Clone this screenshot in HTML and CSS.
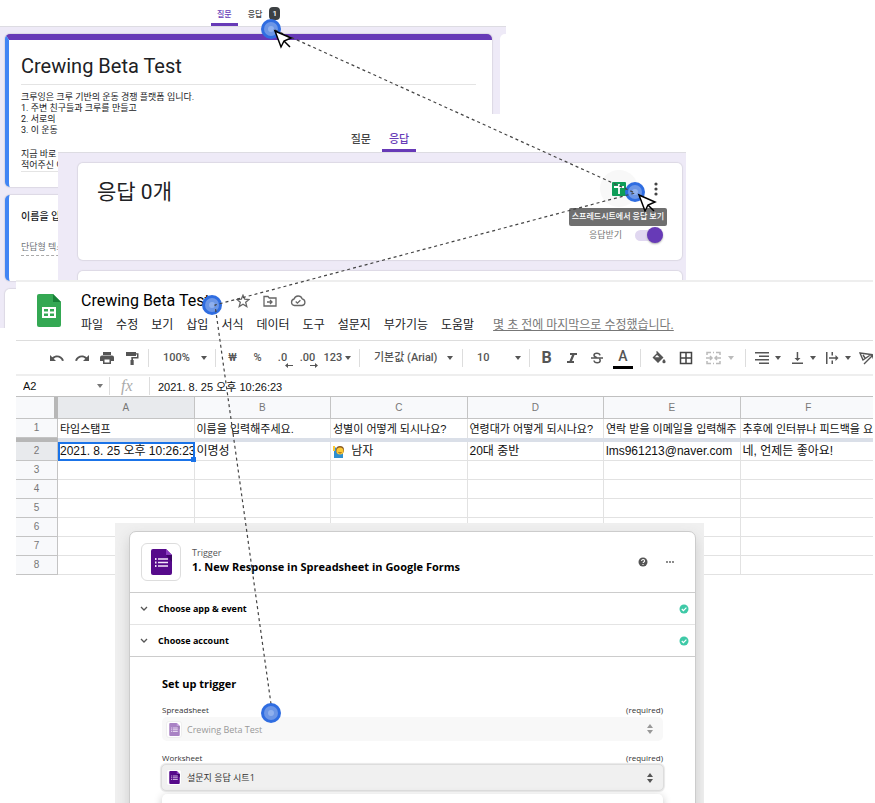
FILE: index.html
```
<!DOCTYPE html>
<html lang="ko">
<head>
  <meta charset="UTF-8">
  <title>Crewing Beta Test</title>
  <link rel="stylesheet" href="styles.css">
</head>
<body>
  <!-- shared icons -->
  <svg class="defs" aria-hidden="true">
    <symbol id="forms" viewBox="0 0 21 26">
      <path d="M2 0h13l6 6v18a2 2 0 0 1-2 2H2a2 2 0 0 1-2-2V2a2 2 0 0 1 2-2z" fill="#560a8b"/>
      <path d="M15 6h6v7z" fill="#3d0566"/>
      <path d="M15 0l6 6h-6z" fill="#8b3cc0"/>
      <path d="M7 10h10M7 13.500h10M7 17h10" stroke="#f3e8fa" stroke-width="1.500"/>
      <path d="M4 10h1.500M4 13.500h1.500M4 17h1.500" stroke="#f3e8fa" stroke-width="1.800"/>
    </symbol>
    <symbol id="check" viewBox="0 0 10 10">
      <circle cx="5" cy="5" r="4.500" fill="#3ec9a7"/>
      <path d="M2.800 5l1.600 1.600L7.400 3.600" fill="none" stroke="#fff" stroke-width="1.200"/>
    </symbol>
    <symbol id="chevron" viewBox="0 0 8 6">
      <path d="M1 1l3 3 3-3" fill="none" stroke="#555" stroke-width="1.300"/>
    </symbol>
    <symbol id="updown" viewBox="0 0 6 10">
      <path d="M0 4l3-4 3 4zM0 6h6l-3 4z" fill="currentColor"/>
    </symbol>
  </svg>

  <main class="canvas">
    <section class="window editor">
      <nav class="tabs">
        <button class="tab active">질문</button>
        <button class="tab">응답 <span class="badge">1</span></button>
      </nav>
      <div class="editor-body">
        <div class="questions">
          <div class="card intro">
            <h1>Crewing Beta Test</h1>
            <div class="text">
              <p>크루잉은 크루 기반의 운동 경쟁 플랫폼 입니다.<br>1. 주변 친구들과 크루를 만들고<br>2. 서로의 운<br>3. 이 운동</p>
              <p>지금 바로 크<br>적어주신 이</p>
            </div>
          </div>
          <div class="card question">
            <h2>이름을 입</h2>
            <p>단답형 텍스</p>
          </div>
          <div class="card next"></div>
        </div>
        <div class="side"></div>
      </div>
    </section>

    <section class="window answers">
      <nav class="tabs">
        <button class="tab">질문</button>
        <button class="tab active">응답</button>
      </nav>
      <div class="answers-body">
        <div class="card summary">
          <h2>응답 0개</h2>
          <div class="summary-side">
            <div class="actions">
              <button class="round" aria-label="스프레드시트에서 응답 보기">
                <svg width="14" height="14" viewBox="0 0 14 14"><rect width="14" height="14" rx="1" fill="#0f9d58"/><path d="M2 5h10M7 2v10" stroke="#fff" stroke-width="1.800"/></svg>
              </button>
              <button class="more" aria-label="더보기">
                <svg width="4" height="14" viewBox="0 0 4 14" fill="#444"><circle cx="2" cy="2" r="1.600"/><circle cx="2" cy="7" r="1.600"/><circle cx="2" cy="12" r="1.600"/></svg>
              </button>
              <span class="tooltip">스프레드시트에서 응답 보기</span>
            </div>
            <label class="accept">응답받기 <input type="checkbox" checked></label>
          </div>
        </div>
        <div class="card"></div>
      </div>
    </section>

    <section class="window sheet">
      <header class="sheet-head">
        <svg class="logo" width="24" height="33" viewBox="0 0 24 33">
          <path d="M2 0h14l8 8v23a2 2 0 0 1-2 2H2a2 2 0 0 1-2-2V2a2 2 0 0 1 2-2z" fill="#34a853"/>
          <path d="M16 0l8 8h-8z" fill="#188038"/>
          <path d="M5 13h14v11H5zM7 15v2.500h4V15zM13 15v2.500h4V15zM7 19.500V22h4v-2.500zM13 19.500V22h4v-2.500z" fill="#fff" fill-rule="evenodd"/>
        </svg>
        <div>
          <div class="title">
            <h2>Crewing Beta Test</h2>
            <button aria-label="별표"><svg width="14" height="14" viewBox="0 0 14 14"><path d="M7 1.200l1.700 4 4.300.3-3.300 2.800 1.100 4.300L7 10.300l-3.800 2.300 1.100-4.300L1 5.500l4.300-.3z"/></svg></button>
            <button aria-label="이동"><svg width="14" height="14" viewBox="0 0 14 14"><path d="M1 2.500h4l1.300 1.500H13v8H1zM4 8h5M7 6l2 2-2 2"/></svg></button>
            <button aria-label="저장됨"><svg width="16" height="14" viewBox="0 0 16 14"><path d="M4.500 11.500a3.300 3.300 0 0 1-.4-6.500 4.200 4.200 0 0 1 8-.2 3.400 3.400 0 0 1 0 6.700zM5.700 7.500l1.700 1.700 3-3"/></svg></button>
          </div>
          <nav class="menu">
            <button>파일</button><button>수정</button><button>보기</button><button>삽입</button><button>서식</button><button>데이터</button><button>도구</button><button>설문지</button><button>부가기능</button><button>도움말</button>
            <a href="#">몇 초 전에 마지막으로 수정했습니다.</a>
          </nav>
        </div>
      </header>

      <div class="toolbar">
        <button aria-label="실행취소"><svg width="16" height="14" viewBox="0 0 16 14"><path d="M1 4v6h6L4.700 7.700C7.500 5.300 11.500 6 13 10l2-.6C13 4.300 7.300 3 3.300 6.300z"/></svg></button>
        <button aria-label="재실행"><svg width="16" height="14" viewBox="0 0 16 14"><path d="M15 4v6H9l2.300-2.300C8.500 5.300 4.500 6 3 10l-2-.6C3 4.300 8.700 3 12.700 6.300z"/></svg></button>
        <button aria-label="인쇄"><svg width="14" height="14" viewBox="0 0 14 14"><path d="M3 1h8v3H3zM2 4.500h10a2 2 0 0 1 2 2V10h-3v3H3v-3H0V6.500a2 2 0 0 1 2-2zM4.500 8.500v3h5v-3z" fill-rule="evenodd"/></svg></button>
        <button aria-label="서식 복사"><svg width="14" height="14" viewBox="0 0 14 14"><path d="M1 1h10v1.200h2.500V7.500H8V9h.7v5H5.500V9h.8V6H12V3.600h-1V5H1z"/></svg></button>
        <span class="sep"></span>
        <label class="drop zoom"><select aria-label="확대"><option>100%</option></select></label>
        <span class="sep"></span>
        <button>₩</button>
        <button>%</button>
        <button class="dec">.0<svg width="8" height="5" viewBox="0 0 8 5"><path d="M0 2.500L3 0v2h5v1H3v2z"/></svg></button>
        <button class="dec">.00<svg width="8" height="5" viewBox="0 0 8 5"><path d="M8 2.500L5 0v2H0v1h5v2z"/></svg></button>
        <button class="with-caret format">123</button>
        <span class="sep"></span>
        <label class="drop family"><select aria-label="글꼴"><option>기본값 (Arial)</option></select></label>
        <span class="sep"></span>
        <label class="drop zoom"><select aria-label="글꼴 크기"><option>10</option></select></label>
        <span class="sep"></span>
        <button class="bold">B</button>
        <button aria-label="기울임꼴"><svg width="12" height="12" viewBox="0 0 12 12"><path d="M4 1h7v2H8.500L6 9h2v2H1V9h2.500L6 3H4z"/></svg></button>
        <button aria-label="취소선"><svg width="14" height="14" viewBox="0 0 14 14"><path d="M1 7h12M10 4.300C9.500 1.500 4 1.500 4 4.300c0 1.400 1.500 1.900 3 2.400M4 9.500c.4 3 6.200 3 6.200 0 0-.8-.3-1.300-.8-1.700" fill="none" stroke="#555" stroke-width="1.500"/></svg></button>
        <button class="color">A</button>
        <span class="sep"></span>
        <button class="wide" aria-label="채우기 색상"><svg width="14" height="14" viewBox="0 0 14 14"><path d="M4 1l1-1 6.500 6.500L6 12 .5 6.500 5 2zM5 4L2.800 6.300h4.700zM12 8s1.600 1.700 1.600 2.700a1.600 1.600 0 0 1-3.200 0C10.400 9.700 12 8 12 8z" fill-rule="evenodd"/></svg></button>
        <button class="wide" aria-label="테두리"><svg width="14" height="14" viewBox="0 0 14 14"><path d="M1.500 1.500h11v11h-11zM7 1v12M1 7h12" fill="none" stroke="#444" stroke-width="1.500"/></svg></button>
        <button class="merge" aria-label="셀 병합" disabled><svg width="15" height="14" viewBox="0 0 15 14"><path d="M5 1.500H1V4M10 1.500h4V4M5 12.500H1V10M10 12.500h4V10M7 1.500h1M7 12.500h1M0 7h6M4 5l2 2-2 2M15 7H9M11 5L9 7l2 2" fill="none" stroke="#bbb" stroke-width="1.500"/></svg></button>
        <span class="sep"></span>
        <button class="with-caret" aria-label="가로 맞춤"><svg width="14" height="14" viewBox="0 0 14 14"><path d="M0 1h14v1.500H0zM4 4.500h10V6H4zM0 8h14v1.500H0zM4 11.500h10V13H4z"/></svg></button>
        <button class="with-caret" aria-label="세로 맞춤"><svg width="14" height="14" viewBox="0 0 14 14"><path d="M2 11.500h11V13H2zM6.700 1h1.500v6h2.300l-3 3-3-3h2.200z"/></svg></button>
        <button class="with-caret" aria-label="텍스트 줄바꿈"><svg width="14" height="14" viewBox="0 0 14 14"><path d="M1 1h1.500v12H1zM6.500 1H8v3.500H6.500zM6.500 9.500H8V13H6.500zM4 6.300h6.500V4l3 3-3 3V7.700H4z"/></svg></button>
        <button class="with-caret" aria-label="텍스트 회전"><svg width="15" height="14" viewBox="0 0 15 14"><path d="M1 2l11 1.500-8 5.500zM4 4l2 3M5 13l9-9M10.500 4H14v3.500" fill="none" stroke="#555" stroke-width="1.400"/></svg></button>
      </div>

      <div class="formula">
        <label class="drop cell-name"><input type="text" aria-label="이름 상자" value="A2"></label>
        <span class="sep"></span>
        <label class="fx" for="fx">fx</label>
        <span class="sep"></span>
        <input type="text" id="fx" value="2021. 8. 25 오후 10:26:23">
      </div>

      <table class="grid">
        <thead>
          <tr><th class="num"></th><th class="on">A</th><th>B</th><th>C</th><th>D</th><th>E</th><th>F</th></tr>
        </thead>
        <tbody>
          <tr class="names"><th>1</th><td>타임스탬프</td><td>이름을 입력해주세요.</td><td>성별이 어떻게 되시나요?</td><td>연령대가 어떻게 되시나요?</td><td>연락 받을 이메일을 입력해주</td><td>추후에 인터뷰나 피드백을 요</td></tr>
          <tr class="freeze"><th></th><td colspan="6"></td></tr>
          <tr>
            <th class="on">2</th><td class="selected">2021. 8. 25 오후 10:26:23</td><td>이명성</td>
            <td>
              <svg class="emoji" width="12" height="13" viewBox="0 0 12 13"><path d="M1 12V4l2-2 1 6h6v5H1z" fill="#2f8fd0"/><circle cx="7" cy="5" r="4" fill="#8a5a20"/><circle cx="7" cy="6" r="3.500" fill="#fcc934"/><path d="M0 1h2v5H0z" fill="#fcc934"/><path d="M5.500 7.500q1.500 1 3 0" fill="none" stroke="#8a5a20"/></svg>
              남자</td>
            <td>20대 중반</td><td>lms961213@naver.com</td><td>네, 언제든 좋아요!</td>
          </tr>
          <tr><th>3</th><td></td><td></td><td></td><td></td><td></td><td></td></tr>
          <tr><th>4</th><td></td><td></td><td></td><td></td><td></td><td></td></tr>
          <tr><th>5</th><td></td><td></td><td></td><td></td><td></td><td></td></tr>
          <tr><th>6</th><td></td><td></td><td></td><td></td><td></td><td></td></tr>
          <tr><th>7</th><td></td><td></td><td></td><td></td><td></td><td></td></tr>
          <tr><th>8</th><td></td><td></td><td></td><td></td><td></td><td></td></tr>
        </tbody>
      </table>
    </section>

    <section class="window zap">
      <div class="panel">
        <header class="panel-head">
          <div class="app"><svg width="21" height="26"><use href="#forms"/></svg></div>
          <div class="panel-title">
            <p>Trigger</p>
            <h2>1. New Response in Spreadsheet in Google Forms</h2>
          </div>
          <div class="panel-tools">
            <button aria-label="Help"><svg width="10" height="10" viewBox="0 0 10 10"><circle cx="5" cy="5" r="4.500" fill="#555"/><path d="M3.600 4c0-2 3-1.800 3 0 0 1-1.500 1-1.500 2M5 7v1" fill="none" stroke="#fff" stroke-width="1.100"/></svg></button>
            <button aria-label="More"><svg width="8" height="2" viewBox="0 0 8 2" fill="#555"><circle cx="1" cy="1" r=".9"/><circle cx="4" cy="1" r=".9"/><circle cx="7" cy="1" r=".9"/></svg></button>
          </div>
        </header>
        <button class="step"><svg width="8" height="6"><use href="#chevron"/></svg><span>Choose app &amp; event</span><svg width="10" height="10"><use href="#check"/></svg></button>
        <button class="step last"><svg width="8" height="6"><use href="#chevron"/></svg><span>Choose account</span><svg width="10" height="10"><use href="#check"/></svg></button>
        <div class="setup">
          <h3>Set up trigger</h3>
          <div class="field-name"><label for="spreadsheet">Spreadsheet</label><span>(required)</span></div>
          <div class="field off">
            <span class="app small"><svg width="11" height="13"><use href="#forms"/></svg></span>
            <select id="spreadsheet" disabled><option>Crewing Beta Test</option></select>
            <svg width="6" height="10"><use href="#updown"/></svg>
          </div>
          <div class="field-name"><label for="worksheet">Worksheet</label><span>(required)</span></div>
          <div class="field">
            <span class="app small"><svg width="11" height="13"><use href="#forms"/></svg></span>
            <select id="worksheet"><option>설문지 응답 시트1</option></select>
            <svg width="6" height="10"><use href="#updown"/></svg>
          </div>
          <div class="options"></div>
        </div>
      </div>
    </section>

    <!-- click path through the windows -->
    <svg class="path" width="875" height="803" viewBox="0 0 875 803">
      <defs>
        <g id="dot">
          <circle r="10" fill="#2f6de1"/>
          <circle r="7" fill="#6c96e6"/>
          <circle r="3" fill="#8fb0ee"/>
        </g>
        <g id="cursor">
          <path d="M0 0l6 16 3-6 7-3z"/>
          <path d="M9 10l6 6"/>
        </g>
      </defs>
      <use href="#dot" x="271" y="29"/>
      <use href="#dot" x="635" y="192"/>
      <use href="#dot" x="212" y="305"/>
      <path class="line" d="M275 30L635 193L215 305L271 704"/>
      <use href="#dot" x="271" y="713"/>
      <use class="cursor" href="#cursor" x="275" y="31"/>
      <use class="cursor" href="#cursor" x="639" y="195"/>
    </svg>
  </main>
</body>
</html>
```
FILE: styles.css
```
* {
  box-sizing: border-box;
  margin: 0;
  padding: 0;
}
body {
  background: #ffffff;
  color: #202124;
  font-family: Roboto, "Noto Sans CJK KR", sans-serif;
}
button,
select,
input {
  border: 0;
  background: none;
  color: inherit;
  font: inherit;
  appearance: none;
}
h1,
h2,
h3 {
  font-weight: 400;
}
svg {
  flex: none;
  display: block;
}
.defs {
  position: absolute;
  width: 0;
  height: 0;
}
.canvas {
  position: relative;
  min-height: 100vh;
  overflow: hidden;
}
.window {
  position: absolute;
  overflow: hidden;
}

/* tabs */
.tabs {
  display: flex;
  justify-content: center;
  gap: 4px;
  background: #ffffff;
  border-bottom: 1px solid #dddce2;
}
.tab {
  display: flex;
  align-items: center;
  gap: 7px;
  padding: 3px 6px 0;
  border-bottom: 3px solid transparent;
  color: #444444;
  font-weight: 500;
}
.tab.active {
  border-color: #673ab7;
  border-radius: 2px 2px 0 0;
  color: #673ab7;
}
.badge {
  padding: 0 3px;
  border-radius: 4px;
  background: #3c4043;
  color: #ffffff;
  line-height: 13px;
}
.card {
  border-radius: 5px;
  background: #ffffff;
  box-shadow: 0 0 1px 1px #dcd9e4;
}

/* form editor */
.editor {
  top: 0;
  left: 0;
  width: 506px;
  height: 328px;
  background: #eeeaf7;
}
.editor .tabs {
  height: 27px;
  padding-right: 9px;
  font-size: 8px;
}
.editor-body {
  display: flex;
  gap: 8px;
  padding: 7px 0 0 5px;
}
.questions {
  flex: 1;
  display: flex;
  flex-direction: column;
  gap: 8px;
}
.side {
  width: 6px;
  border-radius: 5px 0 0 0;
  background: #ffffff;
}
.intro {
  padding: 12px 16px 15px 12px;
  border-top: 6px solid #673ab7;
  border-left: 4px solid #4285f4;
}
.intro h1 {
  padding-bottom: 4px;
  border-bottom: 1px solid #e4e4e4;
  font-size: 20px;
  line-height: 28px;
}
.intro .text {
  display: flex;
  flex-direction: column;
  gap: 13px;
  padding-top: 7px;
  border-bottom: 1px solid #e4e4e4;
  font-size: 9px;
  line-height: 11px;
}
.question {
  height: 86px;
  padding: 14px 16px 0 12px;
  border-left: 4px solid #4285f4;
}
.question h2 {
  font-size: 10px;
  font-weight: 500;
  line-height: 16px;
}
.question p {
  margin-top: 14px;
  border-bottom: 1px dashed #aaaaaa;
  color: #70757a;
  font-size: 9px;
  line-height: 16px;
}
.next {
  height: 60px;
}

/* responses */
.answers {
  top: 114px;
  left: 58px;
  width: 628px;
  height: 168px;
  background: #eeeaf7;
}
.answers .tabs {
  height: 39px;
  padding-left: 16px;
  font-size: 11px;
}
.answers .tab {
  padding: 12px 7px 0;
}
.answers-body {
  display: flex;
  flex-direction: column;
  gap: 11px;
  padding: 10px 4px 0 20px;
}
.answers .card {
  min-height: 60px;
}
.summary {
  display: flex;
  justify-content: space-between;
  padding: 7px 19px 17px;
}
.summary h2 {
  padding-top: 8px;
  font-size: 21px;
  line-height: 28px;
}
.summary-side {
  display: flex;
  flex-direction: column;
  align-items: flex-end;
  gap: 20px;
}
.actions {
  position: relative;
  display: flex;
  align-items: center;
  gap: 16px;
  padding-right: 5px;
}
.round {
  display: grid;
  place-items: center;
  width: 38px;
  height: 37px;
  border-radius: 50%;
  background: #f8f8f8;
}
.tooltip {
  position: absolute;
  top: 38px;
  right: -4px;
  padding: 0 3px;
  border-radius: 2px;
  background: #6f6f6f;
  color: #ffffff;
  font-size: 8px;
  font-weight: 500;
  line-height: 18px;
  white-space: nowrap;
}
.accept {
  display: flex;
  align-items: center;
  gap: 13px;
  color: #777777;
  font-size: 9px;
  line-height: 16px;
}
.accept input {
  display: flex;
  justify-content: flex-end;
  align-items: center;
  width: 28px;
  height: 11px;
  border-radius: 6px;
  background: #e0d7f0;
}
.accept input::after {
  content: "";
  width: 16px;
  height: 16px;
  border-radius: 50%;
  background: #673ab7;
  box-shadow: 0 1px 2px #aaaaaa;
}

/* spreadsheet */
.sheet {
  top: 280px;
  left: 16px;
  right: 2px;
  border-top: 2px solid #eeeeee;
  background: #ffffff;
}
.sheet-head {
  display: flex;
  gap: 20px;
  height: 58px;
  padding: 8px 0 0 21px;
}
.logo {
  margin-top: 4px;
}
.title {
  display: flex;
  align-items: center;
  gap: 13px;
}
.title h2 {
  margin-right: 13px;
  color: #000000;
  font-size: 16px;
  line-height: 22px;
}
.title svg {
  fill: none;
  stroke: #666666;
  stroke-width: 1.3;
}
.menu {
  display: flex;
  gap: 13px;
  font-size: 12px;
  line-height: 26px;
  white-space: nowrap;
}
.menu a {
  margin-left: 6px;
  color: #777777;
}
.toolbar {
  display: flex;
  align-items: center;
  height: 36px;
  padding-left: 28px;
  border-top: 1px solid #dddddd;
  border-bottom: 2px solid #eeeeee;
  color: #555555;
  font-size: 11px;
  font-weight: 500;
}
.toolbar button {
  flex: none;
  display: flex;
  align-items: center;
  justify-content: center;
  width: 25px;
  height: 24px;
}
.toolbar svg {
  fill: #555555;
}
.toolbar .wide {
  width: 27px;
}
.toolbar .merge {
  gap: 7px;
  width: 42px;
  color: #bbbbbb;
}
.toolbar .with-caret {
  gap: 6px;
  width: 35px;
}
.toolbar .format {
  gap: 3px;
}
.with-caret::after,
.merge::after,
.drop::after {
  content: "";
  border: 3px solid transparent;
  border-top: 4px solid currentColor;
  border-bottom: 0;
}
.toolbar .dec {
  position: relative;
}
.dec svg {
  position: absolute;
  right: 2px;
  bottom: 2px;
}
.toolbar .bold {
  font-size: 16px;
  font-weight: 700;
}
.toolbar .color {
  width: 20px;
  height: 22px;
  margin: 0 3px 0 4px;
  border-bottom: 3px solid #000000;
  font-size: 14px;
}
.sep {
  flex: none;
  width: 1px;
  height: 18px;
  margin: 0 4px;
  background: #dddddd;
}
.drop {
  flex: none;
  display: flex;
  align-items: center;
  justify-content: space-between;
}
.zoom {
  width: 58px;
  padding: 0 4px 0 10px;
}
.family {
  width: 94px;
  padding: 0 5px 0 10px;
  white-space: nowrap;
}
.formula {
  display: flex;
  align-items: center;
  height: 21px;
  border-bottom: 1px solid #c0c0c0;
  color: #111111;
  font-family: "Liberation Sans", "Noto Sans CJK KR", sans-serif;
  font-size: 11px;
}
.cell-name {
  width: 89px;
  padding: 0 2px 0 7px;
}
.cell-name input {
  width: 60px;
}
.cell-name::after {
  color: #777777;
}
.fx {
  width: 31px;
  padding-left: 7px;
  color: #aaaaaa;
  font-family: "Liberation Serif", serif;
  font-size: 16px;
  font-style: italic;
}
.formula > input {
  flex: 1;
  padding-left: 4px;
}
.grid {
  width: 861px;
  border-collapse: separate;
  border-spacing: 0;
  table-layout: fixed;
  color: #111111;
  font-family: "Liberation Sans", "Noto Sans CJK KR", sans-serif;
  font-size: 12px;
}
.grid tr {
  height: 19px;
}
.grid thead tr {
  height: 22px;
}
.grid th,
.grid td {
  overflow: hidden;
  border-right: 1px solid #e2e2e2;
  border-bottom: 1px solid #e2e2e2;
  line-height: 18px;
  white-space: nowrap;
}
.grid td {
  padding-left: 2px;
}
.grid th {
  border-color: #c4c4c4;
  background: #f8f9fb;
  color: #777777;
  font-size: 10px;
  font-weight: 400;
}
.grid .num {
  width: 42px;
  border-right: 4px solid #b7b7b7;
}
.grid .on {
  background: #e8eaed;
}
.grid .names td {
  border-bottom: 0;
  font-size: 11px;
}
.grid .freeze {
  height: 4px;
}
.grid .freeze th {
  border: 0;
  background: #b7b7b7;
}
.grid .freeze td {
  height: 4px;
  border: 0;
  background: #dadfe8;
}
.grid .selected {
  position: relative;
  overflow: visible;
  outline: 2px solid #1a73e8;
  outline-offset: -2px;
}
.selected::after {
  content: "";
  position: absolute;
  right: -2px;
  bottom: -2px;
  width: 5px;
  height: 5px;
  background: #1a73e8;
}
.emoji {
  display: inline-block;
  margin-right: 3px;
  vertical-align: middle;
}

/* trigger setup */
.zap {
  top: 523px;
  bottom: 0;
  left: 115px;
  width: 589px;
  padding: 8px 8px 0 14px;
  background: #f0f0f0;
  color: #000000;
  font-family: "Open Sans", "Noto Sans CJK KR", sans-serif;
}
.panel {
  min-height: 300px;
  border: 1px solid #cccccc;
  border-radius: 7px;
  background: #ffffff;
  box-shadow: 0 6px 14px #cccccc;
}
.panel-head {
  display: flex;
  align-items: center;
  gap: 11px;
  height: 61px;
  padding: 0 21px 0 11px;
  border-bottom: 1px solid #cccccc;
}
.app {
  display: grid;
  place-items: center;
  width: 40px;
  height: 38px;
  border: 1px solid #dddddd;
  border-radius: 6px;
  background: #ffffff;
}
.panel-title {
  flex: 1;
  padding-bottom: 2px;
}
.panel-title p {
  color: #555555;
  font-size: 9px;
  line-height: 12px;
}
.panel-title h2 {
  font-size: 11px;
  font-weight: 700;
  line-height: 16px;
}
.panel-tools {
  display: flex;
  align-items: center;
  gap: 18px;
}
.step {
  display: flex;
  align-items: center;
  gap: 10px;
  width: 100%;
  height: 32px;
  padding: 0 6px 0 10px;
  border-bottom: 1px solid #e4e4e4;
  font-size: 9px;
  font-weight: 700;
}
.step span {
  flex: 1;
  text-align: left;
}
.step.last {
  border-color: #cccccc;
}
.setup {
  padding: 18px 32px 0;
}
.setup h3 {
  margin-bottom: 11px;
  font-size: 11px;
  font-weight: 700;
  line-height: 18px;
}
.field-name {
  display: flex;
  justify-content: space-between;
  color: #333333;
  font-size: 8px;
  line-height: 12px;
}
.field {
  display: flex;
  align-items: center;
  gap: 5px;
  height: 27px;
  margin: 0 -1px;
  padding: 0 10px 0 4px;
  border: 1px solid #dddddd;
  border-radius: 5px;
  background: #f0f0f0;
  box-shadow: 0 0 1px 1px #e8e8e8;
  color: #555555;
  font-size: 9px;
}
.field.off {
  height: 24px;
  margin: 1px 0 11px;
  border: 0;
  background: #f8f8f8;
  box-shadow: none;
  color: #999999;
}
.field select {
  flex: 1;
  color: #333333;
  opacity: 1;
}
.field.off select {
  color: #999999;
}
.off .app svg {
  opacity: .5;
}
.small {
  width: 16px;
  height: 17px;
  border-color: #eeeeee;
  border-radius: 3px;
}
.options {
  height: 40px;
  margin-top: 3px;
  border-radius: 5px;
  background: #ffffff;
  box-shadow: 0 2px 9px #c8c8c8;
}

/* click path */
.path {
  position: absolute;
  top: 0;
  left: 0;
  pointer-events: none;
}
.line {
  fill: none;
  stroke: #444444;
  stroke-width: 1.2;
  stroke-dasharray: 3 3;
}
.cursor {
  fill: #ffffff;
  stroke: #000000;
  stroke-width: 1.5;
}
```
